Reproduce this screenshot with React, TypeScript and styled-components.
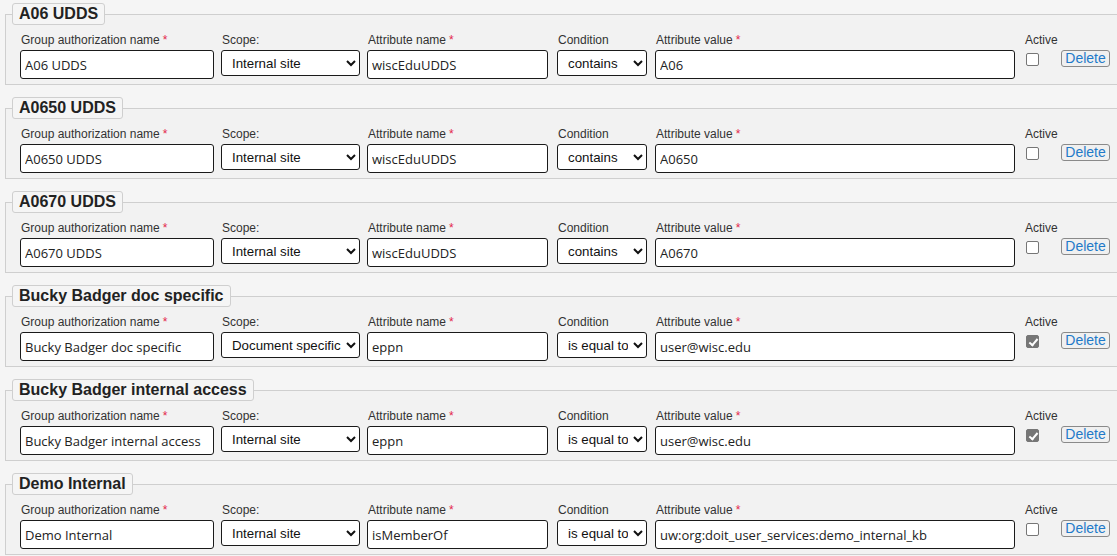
import React from "react";
import styled, { createGlobalStyle } from "styled-components";

interface GroupAuth {
  name: string;
  scope: string;
  attribute: string;
  condition: string;
  value: string;
  active: boolean;
}

const groups: GroupAuth[] = [
  { name: "A06 UDDS", scope: "Internal site", attribute: "wiscEduUDDS", condition: "contains", value: "A06", active: false },
  { name: "A0650 UDDS", scope: "Internal site", attribute: "wiscEduUDDS", condition: "contains", value: "A0650", active: false },
  { name: "A0670 UDDS", scope: "Internal site", attribute: "wiscEduUDDS", condition: "contains", value: "A0670", active: false },
  { name: "Bucky Badger doc specific", scope: "Document specific", attribute: "eppn", condition: "is equal to", value: "user@wisc.edu", active: true },
  { name: "Bucky Badger internal access", scope: "Internal site", attribute: "eppn", condition: "is equal to", value: "user@wisc.edu", active: true },
  { name: "Demo Internal", scope: "Internal site", attribute: "isMemberOf", condition: "is equal to", value: "uw:org:doit_user_services:demo_internal_kb", active: false },
];

const GlobalStyle = createGlobalStyle`
  html, body {
    margin: 0;
    background: #f5f5f5;
    overflow: hidden;
  }
  body {
    font-family: "Liberation Sans", Arial, sans-serif;
    color: #222;
  }
`;

const Page = styled.div`
  width: 1140px;
  padding: 3px 0 0 5px;
`;

const GroupBox = styled.fieldset`
  margin: 0 0 12px;
  padding: 0 6px 5px;
  border: 1px solid #cfcfcf;
  background: #f2f2f2;
  min-width: 0;
`;

const GroupTitle = styled.legend`
  padding: 0 6px;
  border: 1px solid #cfcfcf;
  border-radius: 3px;
  background: #f5f5f5;
  font: bold 16px/20px "Liberation Sans", Arial, sans-serif;
  color: #222;
`;

const Row = styled.div`
  display: flex;
  align-items: flex-start;
  padding: 8px 0 0 8px;
`;

const Field = styled.div<{ $w: number; $gap?: number }>`
  display: flex;
  flex-direction: column;
  width: ${(p) => p.$w}px;
  margin-right: ${(p) => p.$gap ?? 7}px;
  flex-shrink: 0;
`;

const Label = styled.label`
  font-size: 12px;
  line-height: 14px;
  height: 14px;
  margin: 0 0 3px 1px;
  color: #333;
  white-space: nowrap;
`;

const Req = styled.span`
  color: #e3264c;
  margin-left: 3px;
`;

const TextInput = styled.input`
  box-sizing: border-box;
  width: 100%;
  height: 29px;
  margin: 0;
  padding: 0 4px;
  border: 1px solid #1a1a1a;
  border-radius: 3px;
  background: #fff;
  font: 13px "Open Sans", "Noto Sans", sans-serif;
  color: #222;
  outline: none;
`;

const Select = styled.select`
  box-sizing: border-box;
  width: 100%;
  height: 26px;
  margin: 0;
  padding: 0 2px 0 6px;
  border: 1px solid #1a1a1a;
  border-radius: 3px;
  background: #fff;
  font: 13.3px "Liberation Sans", Arial, sans-serif;
  color: #111;
`;

const Check = styled.input.attrs({ type: "checkbox", readOnly: true })`
  appearance: none;
  position: relative;
  box-sizing: border-box;
  width: 13px;
  height: 13px;
  margin: 3px 0 0 2px;
  border: 1px solid #767676;
  border-radius: 2px;
  background: #fff;

  &:checked {
    background: #767676;
  }
  &:checked::after {
    content: "";
    position: absolute;
    left: 3.5px;
    top: 0.5px;
    width: 3px;
    height: 7px;
    border: solid #fff;
    border-width: 0 2px 2px 0;
    transform: rotate(40deg);
  }
`;

const DeleteButton = styled.button`
  box-sizing: border-box;
  margin: 0;
  width: 49px;
  height: 17px;
  padding: 0;
  border: 1px solid #8a8a8a;
  border-radius: 3px;
  background: #f0f0f0;
  color: #1f7ac9;
  font: 14px/15px "Liberation Sans", Arial, sans-serif;
  cursor: pointer;
`;

function GroupRow({ g }: { g: GroupAuth }) {
  return (
    <GroupBox>
      <GroupTitle>{g.name}</GroupTitle>
      <Row>
        <Field $w={194}>
          <Label>
            Group authorization name<Req>*</Req>
          </Label>
          <TextInput defaultValue={g.name} />
        </Field>
        <Field $w={139}>
          <Label>Scope:</Label>
          <Select defaultValue={g.scope}>
            <option>Internal site</option>
            <option>Document specific</option>
          </Select>
        </Field>
        <Field $w={181} $gap={9}>
          <Label>
            Attribute name<Req>*</Req>
          </Label>
          <TextInput defaultValue={g.attribute} />
        </Field>
        <Field $w={90} $gap={8}>
          <Label>Condition</Label>
          <Select defaultValue={g.condition}>
            <option>contains</option>
            <option>is equal to</option>
          </Select>
        </Field>
        <Field $w={360} $gap={9}>
          <Label>
            Attribute value<Req>*</Req>
          </Label>
          <TextInput defaultValue={g.value} />
        </Field>
        <Field $w={37} $gap={0}>
          <Label>Active</Label>
          <Check defaultChecked={g.active} />
        </Field>
        <Field $w={49} $gap={0}>
          <Label />
          <DeleteButton>Delete</DeleteButton>
        </Field>
      </Row>
    </GroupBox>
  );
}

export default function App() {
  return (
    <>
      <GlobalStyle />
      <Page>
        {groups.map((g) => (
          <GroupRow key={g.name} g={g} />
        ))}
      </Page>
    </>
  );
}
